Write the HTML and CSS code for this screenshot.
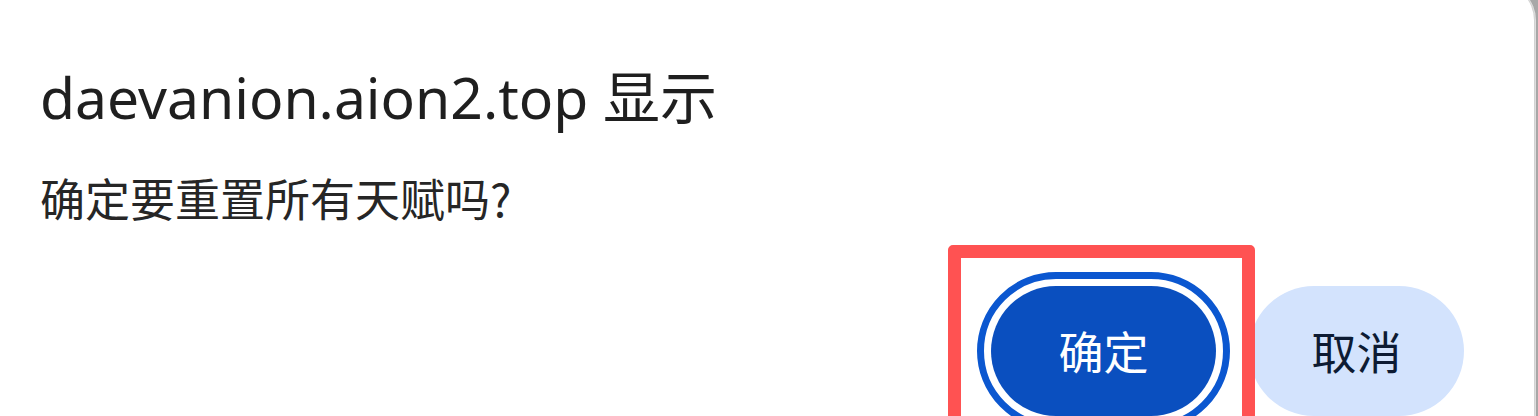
FILE: index.html
```html
<!DOCTYPE html>
<html lang="zh-CN">
<head>
<meta charset="utf-8">
<title>daevanion.aion2.top 显示</title>
<link rel="stylesheet" href="styles.css">
</head>
<body>
<div class="dialog">
  <div class="title">daevanion.aion2.top 显示</div>
  <div class="message">确定要重置所有天赋吗?</div>
  <div class="actions">
    <button class="btn btn-primary">确定</button>
    <button class="btn btn-secondary">取消</button>
  </div>
  <div class="annotation"></div>
</div>
</body>
</html>
```
FILE: styles.css
```css
html, body {
  margin: 0;
  padding: 0;
  height: 416px;
  overflow: hidden;
  background: #a8a8a8;
}

.dialog {
  position: relative;
  box-sizing: border-box;
  width: 1534px;
  height: 432px;
  margin-top: -16px;
  padding: 78px 70px 0 40px;
  background: #ffffff;
  border-top-right-radius: 36px;
  box-shadow: 1px 0 2px rgba(0, 0, 0, 0.12), 2px 0 0 #e6e6e6;
  font-family: "Noto Sans", "Noto Sans CJK SC", sans-serif;
  color: #1f1f1f;
  overflow: hidden;
}

.title {
  font-size: 57px;
  line-height: 70px;
  white-space: nowrap;
}

.message {
  margin-top: 38px;
  font-family: "Noto Sans CJK SC", "Noto Sans", sans-serif;
  font-size: 45px;
  line-height: 56px;
  color: #262626;
}

.actions {
  display: flex;
  justify-content: flex-end;
  align-items: flex-start;
  gap: 33px;
  margin-top: 60px;
}

.btn {
  box-sizing: border-box;
  height: 130px;
  border: 0;
  border-radius: 65px;
  padding: 0;
  font-family: "Noto Sans CJK SC", "Noto Sans", sans-serif;
  font-size: 45px;
  line-height: 130px;
  cursor: pointer;
}

.btn-primary {
  width: 225px;
  background: #0a4fbf;
  color: #ffffff;
  outline: 7px solid #0b57d0;
  outline-offset: 7px;
}

.btn-secondary {
  width: 215px;
  background: #d3e3fd;
  color: #0d1b33;
}

.annotation {
  position: absolute;
  left: 948px;
  top: 261px;
  width: 307px;
  height: 190px;
  box-sizing: border-box;
  border: 13px solid #ff5252;
  border-radius: 5px;
}
```
